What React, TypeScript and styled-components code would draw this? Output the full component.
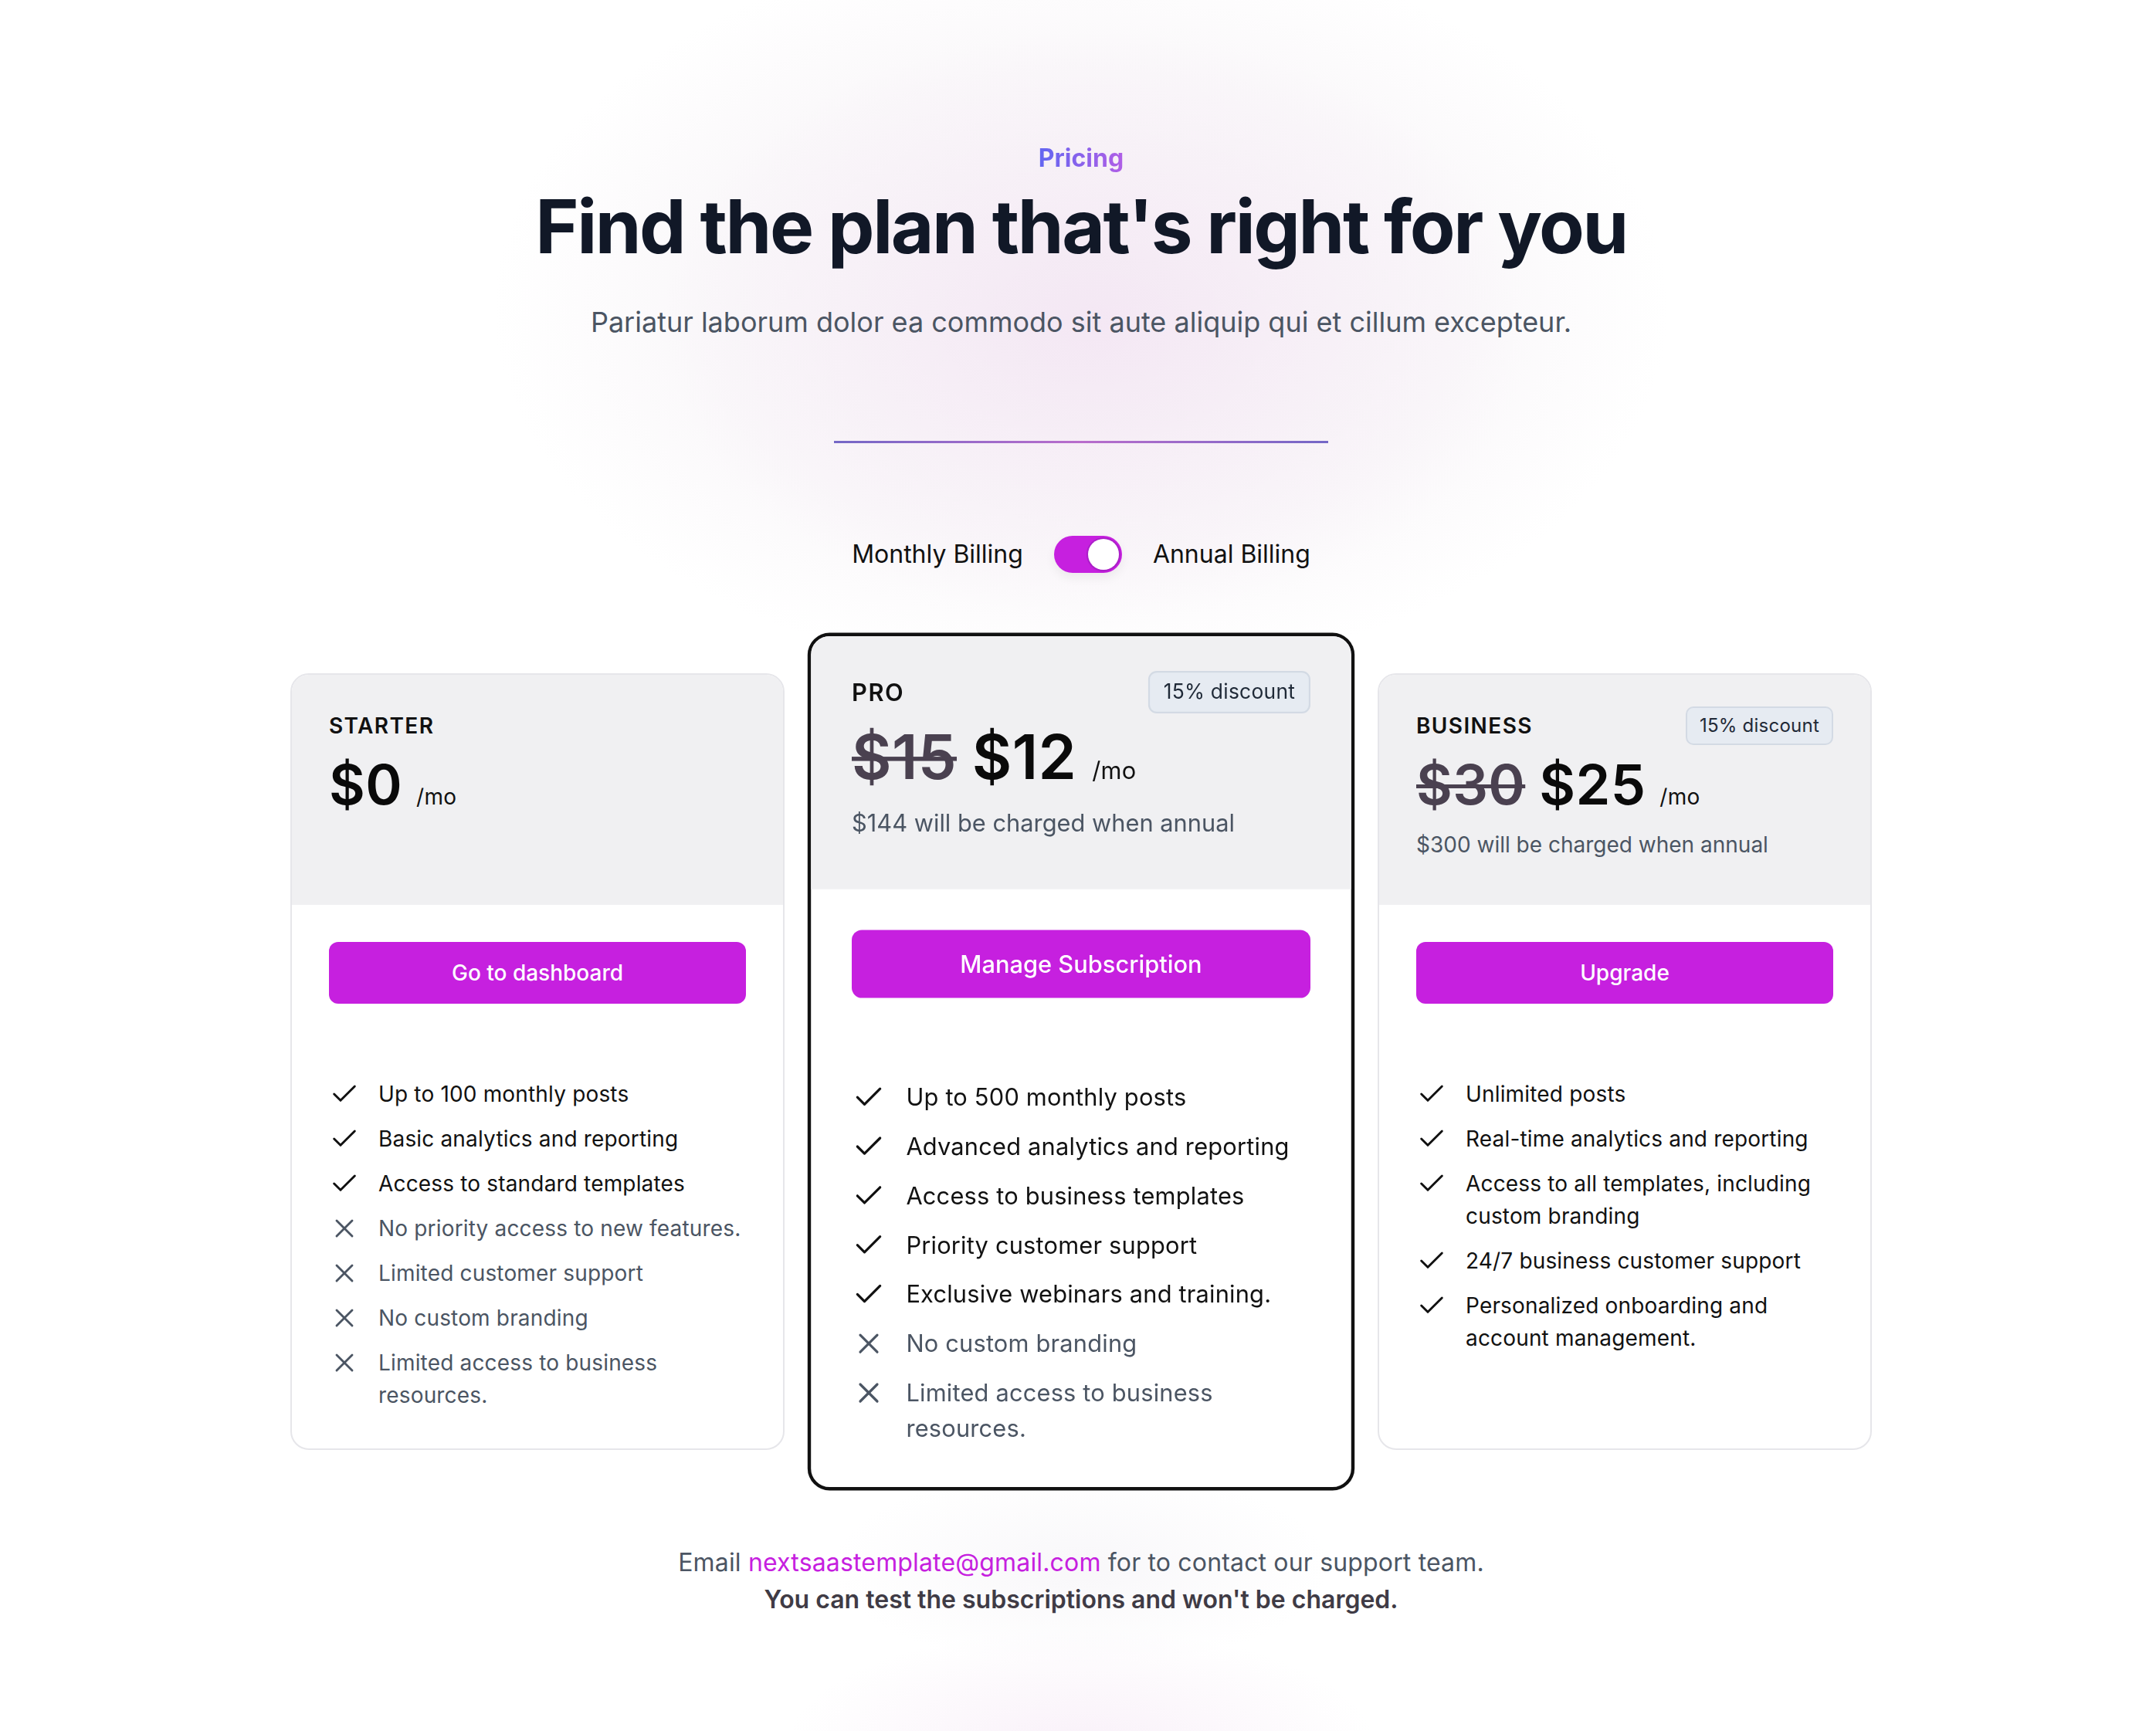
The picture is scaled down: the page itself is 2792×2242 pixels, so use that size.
import React from "react";
import styled, { createGlobalStyle } from "styled-components";
import { Check, X } from "lucide-react";

const ACCENT = "#c620df";

const GlobalStyle = createGlobalStyle`
  *, *::before, *::after { box-sizing: border-box; }
  html, body { margin: 0; padding: 0; background: #ffffff; }
  body {
    font-family: Inter, "Noto Sans", "Liberation Sans", sans-serif;
    color: #111827;
    -webkit-font-smoothing: antialiased;
  }
`;

const Page = styled.main`
  min-height: 2242px;
  padding: 177px 0 140px 8px;
  display: flex;
  flex-direction: column;
  align-items: center;
  background:
    radial-gradient(ellipse 380px 150px at 1400px 2260px, rgba(242, 224, 242, 0.45) 0%, rgba(255, 255, 255, 0) 100%),
    radial-gradient(ellipse 320px 130px at 1400px 2030px, rgba(244, 242, 246, 0.6) 0%, rgba(255, 255, 255, 0) 100%),
    radial-gradient(ellipse 560px 380px at 1420px 420px, rgba(241, 222, 241, 0.55) 0%, rgba(244, 232, 244, 0.4) 55%, rgba(255, 255, 255, 0) 100%),
    radial-gradient(ellipse 760px 480px at 1400px 400px, rgba(246, 241, 246, 0.9) 0%, rgba(248, 245, 248, 0.7) 65%, rgba(255, 255, 255, 0) 100%),
    #ffffff;
`;

const Eyebrow = styled.p`
  margin: 0;
  font-size: 32px;
  line-height: 56px;
  font-weight: 700;
  background: linear-gradient(90deg, #6366f1, #b05ee6);
  -webkit-background-clip: text;
  background-clip: text;
  color: transparent;
`;

const Title = styled.h1`
  margin: 12px 0 0;
  font-size: 96px;
  line-height: 96px;
  font-weight: 700;
  letter-spacing: -0.025em;
  color: #111827;
`;

const Lead = styled.p`
  margin: 44px 0 0;
  font-size: 36px;
  line-height: 64px;
  color: #4b5563;
`;

const Divider = styled.div`
  margin-top: 122px;
  width: 640px;
  height: 3px;
  background: linear-gradient(90deg, #7467c6, #b96dcc 50%, #7467c6);
`;

const BillingRow = styled.div`
  margin-top: 120px;
  display: flex;
  align-items: center;
  gap: 40px;
  font-size: 32px;
  line-height: 48px;
  color: #111111;
`;

const Switch = styled.button`
  width: 88px;
  height: 48px;
  padding: 4px;
  border: 0;
  border-radius: 24px;
  background: ${ACCENT};
  display: flex;
  align-items: center;
  justify-content: flex-end;
  cursor: pointer;
  box-shadow: 0 6px 14px rgba(0, 0, 0, 0.06);
`;

const Knob = styled.span`
  width: 40px;
  height: 40px;
  border-radius: 50%;
  background: #ffffff;
  box-shadow: 0 0 0 2px #ab1fc8, 0 1px 3px rgba(0, 0, 0, 0.2);
`;

const CardsGrid = styled.div`
  margin-top: 130px;
  display: grid;
  grid-template-columns: repeat(3, 640px);
  gap: 64px;
  align-items: stretch;
`;

const Card = styled.div<{ $featured?: boolean }>`
  position: relative;
  display: flex;
  flex-direction: column;
  background: #ffffff;
  border: 2px solid ${(p) => (p.$featured ? "#111111" : "#e6e6ea")};
  border-radius: 24px;
  overflow: hidden;
  transform: ${(p) => (p.$featured ? "scale(1.1)" : "none")};
  box-shadow: ${(p) => (p.$featured ? "0 0 0 2px #111111" : "none")};
  z-index: ${(p) => (p.$featured ? 1 : 0)};
`;

const CardHeader = styled.div`
  height: 298px;
  padding: 48px 48px 0;
  background: #f0f0f2;
`;

const TitleRow = styled.div`
  height: 36px;
  display: flex;
  align-items: center;
  justify-content: space-between;
`;

const PlanName = styled.h3`
  margin: 0;
  font-size: 28px;
  line-height: 36px;
  font-weight: 600;
  letter-spacing: 0.05em;
  text-transform: uppercase;
  color: #111111;
`;

const Badge = styled.span`
  flex: none;
  padding: 7px 16px;
  font-size: 24px;
  line-height: 32px;
  letter-spacing: 0.01em;
  color: #1f2937;
  background: #e6ebf2;
  border: 2px solid #d3dae4;
  border-radius: 10px;
`;

const PriceRow = styled.div`
  margin-top: 18px;
  display: flex;
  align-items: baseline;
  gap: 18px;
`;

const Price = styled.span<{ $struck?: boolean }>`
  font-size: 72px;
  line-height: 80px;
  font-weight: 600;
  letter-spacing: 0.005em;
  color: ${(p) => (p.$struck ? "#4a4150" : "#0a0a0a")};
  text-decoration: ${(p) => (p.$struck ? "line-through" : "none")};
  text-decoration-thickness: 5px;
`;

const Per = styled.span`
  font-size: 28px;
  letter-spacing: 0.01em;
  color: #111111;
`;

const Charged = styled.p`
  margin: 18px 0 0;
  font-size: 28px;
  line-height: 40px;
  color: #4b5563;
`;

const CardBody = styled.div`
  flex: 1;
  padding: 48px;
  display: flex;
  flex-direction: column;
`;

const ActionButton = styled.button`
  width: 100%;
  height: 80px;
  border: 0;
  border-radius: 12px;
  background: ${ACCENT};
  color: #ffffff;
  font-family: inherit;
  font-size: 28px;
  font-weight: 500;
  cursor: pointer;
`;

const Features = styled.ul`
  margin: 96px 0 0;
  padding: 0;
  list-style: none;
  display: flex;
  flex-direction: column;
  gap: 16px;
`;

const Feature = styled.li<{ $included: boolean }>`
  display: flex;
  align-items: flex-start;
  gap: 24px;
  font-size: 28px;
  line-height: 42px;
  letter-spacing: 0.006em;
  color: ${(p) => (p.$included ? "#111111" : "#4b5563")};
`;

const IconBox = styled.span<{ $included: boolean }>`
  flex: none;
  width: 40px;
  height: 42px;
  display: flex;
  align-items: center;
  justify-content: center;
  color: ${(p) => (p.$included ? "#111111" : "#4b5563")};
`;

const Footer = styled.div`
  margin-top: 122px;
  text-align: center;
  font-size: 32px;
  line-height: 48px;
  letter-spacing: 0.005em;
  color: #4b5563;
`;

const Mail = styled.a`
  color: ${ACCENT};
  text-decoration: none;
`;

const Note = styled.strong`
  display: block;
  font-weight: 600;
  letter-spacing: 0;
  color: #3f3b45;
`;

type Plan = {
  name: string;
  oldPrice?: string;
  price: string;
  charged?: string;
  action: string;
  featured?: boolean;
  features: { text: string; included: boolean }[];
};

const plans: Plan[] = [
  {
    name: "Starter",
    price: "$0",
    action: "Go to dashboard",
    features: [
      { text: "Up to 100 monthly posts", included: true },
      { text: "Basic analytics and reporting", included: true },
      { text: "Access to standard templates", included: true },
      { text: "No priority access to new features.", included: false },
      { text: "Limited customer support", included: false },
      { text: "No custom branding", included: false },
      { text: "Limited access to business resources.", included: false },
    ],
  },
  {
    name: "Pro",
    oldPrice: "$15",
    price: "$12",
    charged: "$144 will be charged when annual",
    action: "Manage Subscription",
    featured: true,
    features: [
      { text: "Up to 500 monthly posts", included: true },
      { text: "Advanced analytics and reporting", included: true },
      { text: "Access to business templates", included: true },
      { text: "Priority customer support", included: true },
      { text: "Exclusive webinars and training.", included: true },
      { text: "No custom branding", included: false },
      { text: "Limited access to business resources.", included: false },
    ],
  },
  {
    name: "Business",
    oldPrice: "$30",
    price: "$25",
    charged: "$300 will be charged when annual",
    action: "Upgrade",
    features: [
      { text: "Unlimited posts", included: true },
      { text: "Real-time analytics and reporting", included: true },
      { text: "Access to all templates, including custom branding", included: true },
      { text: "24/7 business customer support", included: true },
      { text: "Personalized onboarding and account management.", included: true },
    ],
  },
];

function PlanCard({ plan }: { plan: Plan }) {
  return (
    <Card $featured={plan.featured}>
      <CardHeader>
        <TitleRow>
          <PlanName>{plan.name}</PlanName>
          {plan.oldPrice && <Badge>15% discount</Badge>}
        </TitleRow>
        <PriceRow>
          {plan.oldPrice && <Price $struck>{plan.oldPrice}</Price>}
          <Price>{plan.price}</Price>
          <Per>/mo</Per>
        </PriceRow>
        {plan.charged && <Charged>{plan.charged}</Charged>}
      </CardHeader>
      <CardBody>
        <ActionButton type="button">{plan.action}</ActionButton>
        <Features>
          {plan.features.map((f) => (
            <Feature key={f.text} $included={f.included}>
              <IconBox $included={f.included}>
                {f.included ? <Check size={40} strokeWidth={1.75} /> : <X size={40} strokeWidth={1.75} />}
              </IconBox>
              <span>{f.text}</span>
            </Feature>
          ))}
        </Features>
      </CardBody>
    </Card>
  );
}

export default function App() {
  return (
    <>
      <GlobalStyle />
      <Page>
        <Eyebrow>Pricing</Eyebrow>
        <Title>Find the plan that's right for you</Title>
        <Lead>Pariatur laborum dolor ea commodo sit aute aliquip qui et cillum excepteur.</Lead>
        <Divider />
        <BillingRow>
          <span>Monthly Billing</span>
          <Switch type="button" role="switch" aria-checked="true" aria-label="Toggle billing period">
            <Knob />
          </Switch>
          <span>Annual Billing</span>
        </BillingRow>
        <CardsGrid>
          {plans.map((p) => (
            <PlanCard key={p.name} plan={p} />
          ))}
        </CardsGrid>
        <Footer>
          Email <Mail href="mailto:nextsaastemplate@gmail.com">nextsaastemplate@gmail.com</Mail> for to contact our support team.
          <Note>You can test the subscriptions and won't be charged.</Note>
        </Footer>
      </Page>
    </>
  );
}
